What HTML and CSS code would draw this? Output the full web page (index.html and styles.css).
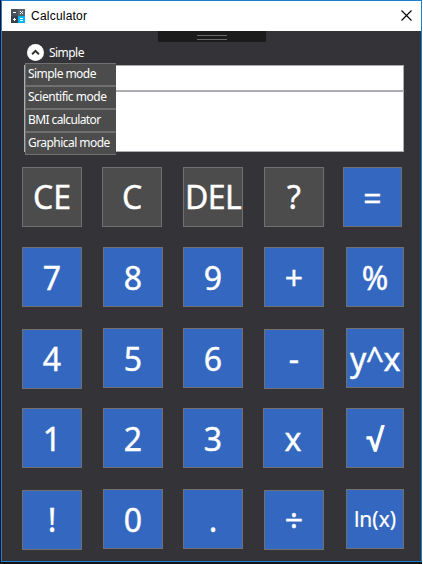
FILE: index.html
```
<!DOCTYPE html>
<html lang="en">
<head>
<meta charset="utf-8">
<title>Calculator</title>
<link rel="stylesheet" href="styles.css">
</head>
<body>
<main class="window">
  <header class="titlebar">
    <svg class="app-icon" width="14" height="14" viewBox="0 0 14 14" shape-rendering="crispEdges">
      <path fill="#46505a" d="M0 0h7v7H0z"/><path fill="#59646e" d="M7 0h7v7H7z"/>
      <path fill="#38434e" d="M0 7h7v7H0z"/><path fill="#00b4f5" d="M7 7h7v7H7z"/>
      <path fill="#fff" d="M2 3h3v1H2zM2 10h3v1H2zM3 9h1v3H3zM9 9h3v1H9zM9 11h3v1H9zM9 2h1v1H9zM11 2h1v1h-1zM10 3h1v1h-1zM9 4h1v1H9zM11 4h1v1h-1z"/>
    </svg>
    <span class="title">Calculator</span>
    <svg class="close" width="11" height="11" viewBox="0 0 11 11"><path d="M.5.5l10 10M10.5.5l-10 10" stroke="#000" stroke-width="1.1"/></svg>
  </header>
  <div class="grip"></div>
  <div class="body">
    <div class="mode">
      <svg width="17" height="17" viewBox="0 0 17 17"><circle cx="8.5" cy="8.5" r="8.5" fill="#fff"/><path d="M5.1 10.2l3.4-3.4 3.4 3.4" fill="none" stroke="#333" stroke-width="2"/></svg>
      <span>Simple</span>
    </div>
    <div class="display">
      <div class="line"></div>
      <div class="result"></div>
      <ul class="menu">
        <li>Simple mode</li><li class="sci">Scientific mode</li><li class="bmi">BMI calculator</li><li>Graphical mode</li>
      </ul>
    </div>
    <div class="keys">
      <button class="dark">CE</button><button class="dark left1">C</button><button class="dark del">DEL</button><button class="dark">?</button><button class="equals">=</button>
      <button>7</button><button>8</button><button>9</button><button>+</button><button>%</button>
      <button class="down1">4</button><button>5</button><button>6</button><button class="down1">-</button><button class="pow">y^x</button>
      <button>1</button><button>2</button><button>3</button><button class="left1">x</button><button class="root">√</button>
      <button class="down1">!</button><button>0</button><button>.</button><button class="down1">÷</button><button class="ln">ln(x)</button>
    </div>
  </div>
</main>
</body>
</html>
```
FILE: styles.css
```
* { box-sizing: border-box; }
body { margin: 0; height: 564px; overflow: hidden; border-right: 1px solid #fff; background: #151217; font-family: "Noto Sans", sans-serif; color: #fff; }
.window { position: relative; width: 421px; height: 562px; margin-left: 1px; border: 1px solid #1c7fd1; background: #343338; }
.titlebar { display: flex; align-items: center; height: 30px; padding: 0 9px; background: #fff; }
.app-icon { margin-top: -1px; }
.title { margin-left: 6px; font: 12px "Liberation Sans", sans-serif; letter-spacing: .22px; color: #000; }
.close { margin-left: auto; margin-top: -2px; }
.grip { position: absolute; top: 30px; left: 156px; width: 108px; height: 11px; background: #1b1b1b; }
.grip::after { content: ""; position: absolute; left: 39px; top: 4px; width: 30px; height: 3px; border: solid #696969; border-width: 1px 0; }
.body { padding: 13px 17px 0 20px; }
.mode { display: flex; align-items: center; gap: 5px; height: 17px; margin-left: 5px; font-size: 12px; letter-spacing: -.55px; }
.display { position: relative; margin: 4px 0 0 2px; width: 380px; height: 87px; border: 1px solid #abadb3; background: #fff; }
.line { height: 26px; border-bottom: 2px solid #abadb3; }
.menu { position: absolute; left: 0; top: -3px; width: 91px; margin: 0; padding: 0; list-style: none; font-size: 12px; }
.menu li { height: 23px; padding-left: 2px; border: solid #707070; border-width: 1px 0 1px 1px; background: #4c4c4c; line-height: 19px; letter-spacing: -.55px; white-space: nowrap; }
.menu .sci { letter-spacing: -.49px; }
.menu .bmi { letter-spacing: -.6px; }
.keys { display: grid; grid-template-columns: 81px 80px 81px 82px 58px; grid-template-rows: 80px 81px 80px 81px 60px; margin-top: 15px; }
.keys button { width: 60px; height: 60px; padding: 2px 0 0; border: 1px solid #707070; background: #3468c0; color: #fff; font: 400 32px/56px "Noto Sans", sans-serif; white-space: nowrap; -webkit-text-stroke: .4px #fff; }
.keys button:nth-child(5n) { width: 58px; }
.keys .dark { padding: 0; line-height: 58px; background: #4c4c4c; }
.keys .del { letter-spacing: -.6px; }
.keys .left1 { margin-left: -1px; }
.keys .down1 { padding-top: 0; margin-top: 1px; }
.keys .equals { margin-left: -3px; }
.keys .equals:nth-child(5n) { width: 59px; }
.keys .pow { letter-spacing: -.6px; }
.keys .root { -webkit-text-stroke-width: 1.3px; }
.keys .ln { padding-top: 0; font-size: 21px; -webkit-text-stroke-width: .2px; }
```
